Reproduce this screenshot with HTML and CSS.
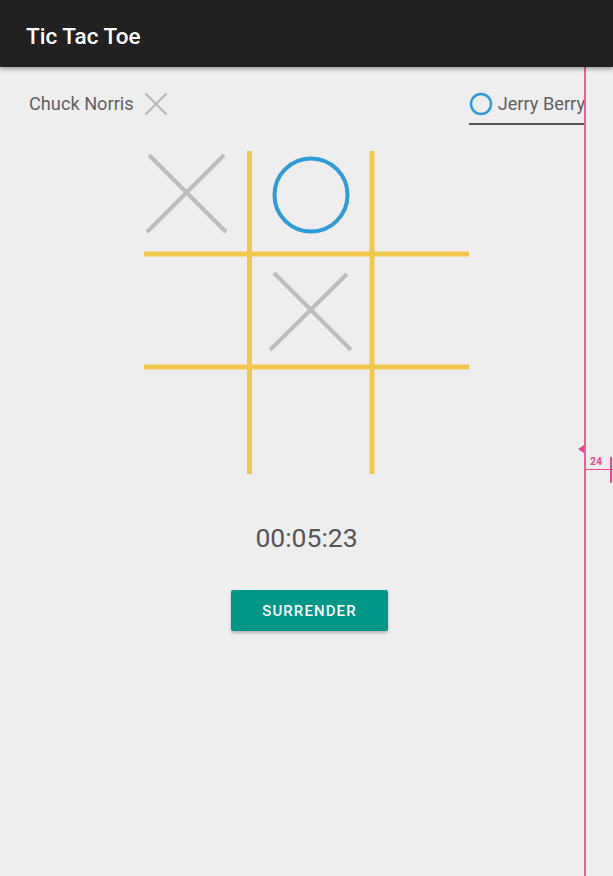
FILE: index.html
```html
<!DOCTYPE html>
<html>
<head>
<meta charset="utf-8">
<link rel="stylesheet" href="styles.css">
</head>
<body>
<header class="appbar"><h1 class="title">Tic Tac Toe</h1></header>
<main class="game">
  <div class="players">
    <div class="player player-x">
      <span class="name">Chuck Norris</span>
      <svg class="icon" width="24" height="24" viewBox="0 0 24 24"><path d="M1.5 1.5 L22.5 22.5 M22.5 1.5 L1.5 22.5" stroke="#bdbdbd" stroke-width="2.4" fill="none"/></svg>
    </div>
    <div class="player player-o active">
      <svg class="icon" width="24" height="24" viewBox="0 0 24 24"><circle cx="12" cy="12" r="10" stroke="#2e9bda" stroke-width="2.5" fill="none"/></svg>
      <span class="name">Jerry Berry</span>
    </div>
  </div>
  <svg class="board" width="325" height="323" viewBox="0 0 325 323">
    <g stroke="#f3c74e" stroke-width="5">
      <line x1="105.5" y1="0" x2="105.5" y2="323"/>
      <line x1="228" y1="0" x2="228" y2="323"/>
      <line x1="0" y1="103" x2="325" y2="103"/>
      <line x1="0" y1="216" x2="325" y2="216"/>
    </g>
    <g stroke="#bdbdbd" stroke-width="4" fill="none">
      <line x1="5" y1="4" x2="82" y2="81"/>
      <line x1="80" y1="4" x2="3" y2="81"/>
      <line x1="130" y1="122" x2="207" y2="199"/>
      <line x1="203" y1="123" x2="126" y2="199"/>
    </g>
    <circle cx="167" cy="44" r="36.5" stroke="#2e9bda" stroke-width="4" fill="none"/>
  </svg>
  <div class="timer">00:05:23</div>
  <button class="surrender">SURRENDER</button>
</main>
<div class="guide">
  <div class="guide-line"></div>
  <div class="guide-flag"></div>
  <div class="guide-label">24</div>
  <div class="guide-h"></div>
  <div class="guide-tick"></div>
</div>
</body>
</html>
```
FILE: styles.css
```css
html, body {
  margin: 0;
  padding: 0;
}
body {
  background: #eeeeee;
  font-family: Roboto, "Liberation Sans", sans-serif;
  width: 613px;
  height: 876px;
  overflow: hidden;
  position: relative;
}
.appbar {
  height: 67px;
  box-sizing: border-box;
  padding: 4px 0 0 26px;
  background: #212121;
  display: flex;
  align-items: center;
  box-shadow: 0 2px 4px rgba(0,0,0,0.35);
  position: relative;
  z-index: 1;
}
.title {
  margin: 0;
  color: #ffffff;
  font-size: 22.5px;
  font-weight: 500;
}
.game {
  display: flex;
  flex-direction: column;
  align-items: center;
}
.players {
  align-self: stretch;
  display: flex;
  justify-content: space-between;
  align-items: flex-start;
  padding: 25px 28px 0 29px;
}
.player {
  display: flex;
  align-items: center;
  font-size: 18.2px;
  line-height: 24px;
  color: #616161;
}
.player-x {
  gap: 10px;
}
.player-o {
  gap: 5px;
  padding-bottom: 7px;
  border-bottom: 2px solid #555555;
}
.icon {
  display: block;
}
.board {
  display: block;
  margin-top: 26px;
}
.timer {
  margin-top: 49px;
  font-size: 26.5px;
  line-height: 30px;
  color: #555555;
}
.surrender {
  margin: 37px 0 0 6px;
  width: 157px;
  height: 41px;
  border: none;
  border-radius: 2px;
  background: #009688;
  color: #ffffff;
  font-family: Roboto, "Liberation Sans", sans-serif;
  font-size: 15px;
  font-weight: 500;
  letter-spacing: 1.1px;
  box-shadow: 0 2px 3px rgba(0,0,0,0.25);
  padding: 0;
}
.guide {
  position: absolute;
  left: 585px;
  top: 67px;
  width: 28px;
  height: 809px;
}
.guide-line {
  position: absolute;
  left: -1px;
  top: 0;
  width: 2px;
  height: 809px;
  background: #ec5f94;
}
.guide-flag {
  position: absolute;
  left: -7px;
  top: 378px;
  width: 0;
  height: 0;
  border-top: 4px solid transparent;
  border-bottom: 4px solid transparent;
  border-right: 6px solid #e84a86;
}
.guide-label {
  position: absolute;
  left: 5px;
  top: 389px;
  font-size: 10.5px;
  font-weight: 700;
  color: #e84a86;
  line-height: 12px;
}
.guide-h {
  position: absolute;
  left: 0;
  top: 402px;
  width: 28px;
  height: 1px;
  background: #e84a86;
}
.guide-tick {
  position: absolute;
  left: 25px;
  top: 390px;
  width: 2px;
  height: 26px;
  background: #e84a86;
}
```
